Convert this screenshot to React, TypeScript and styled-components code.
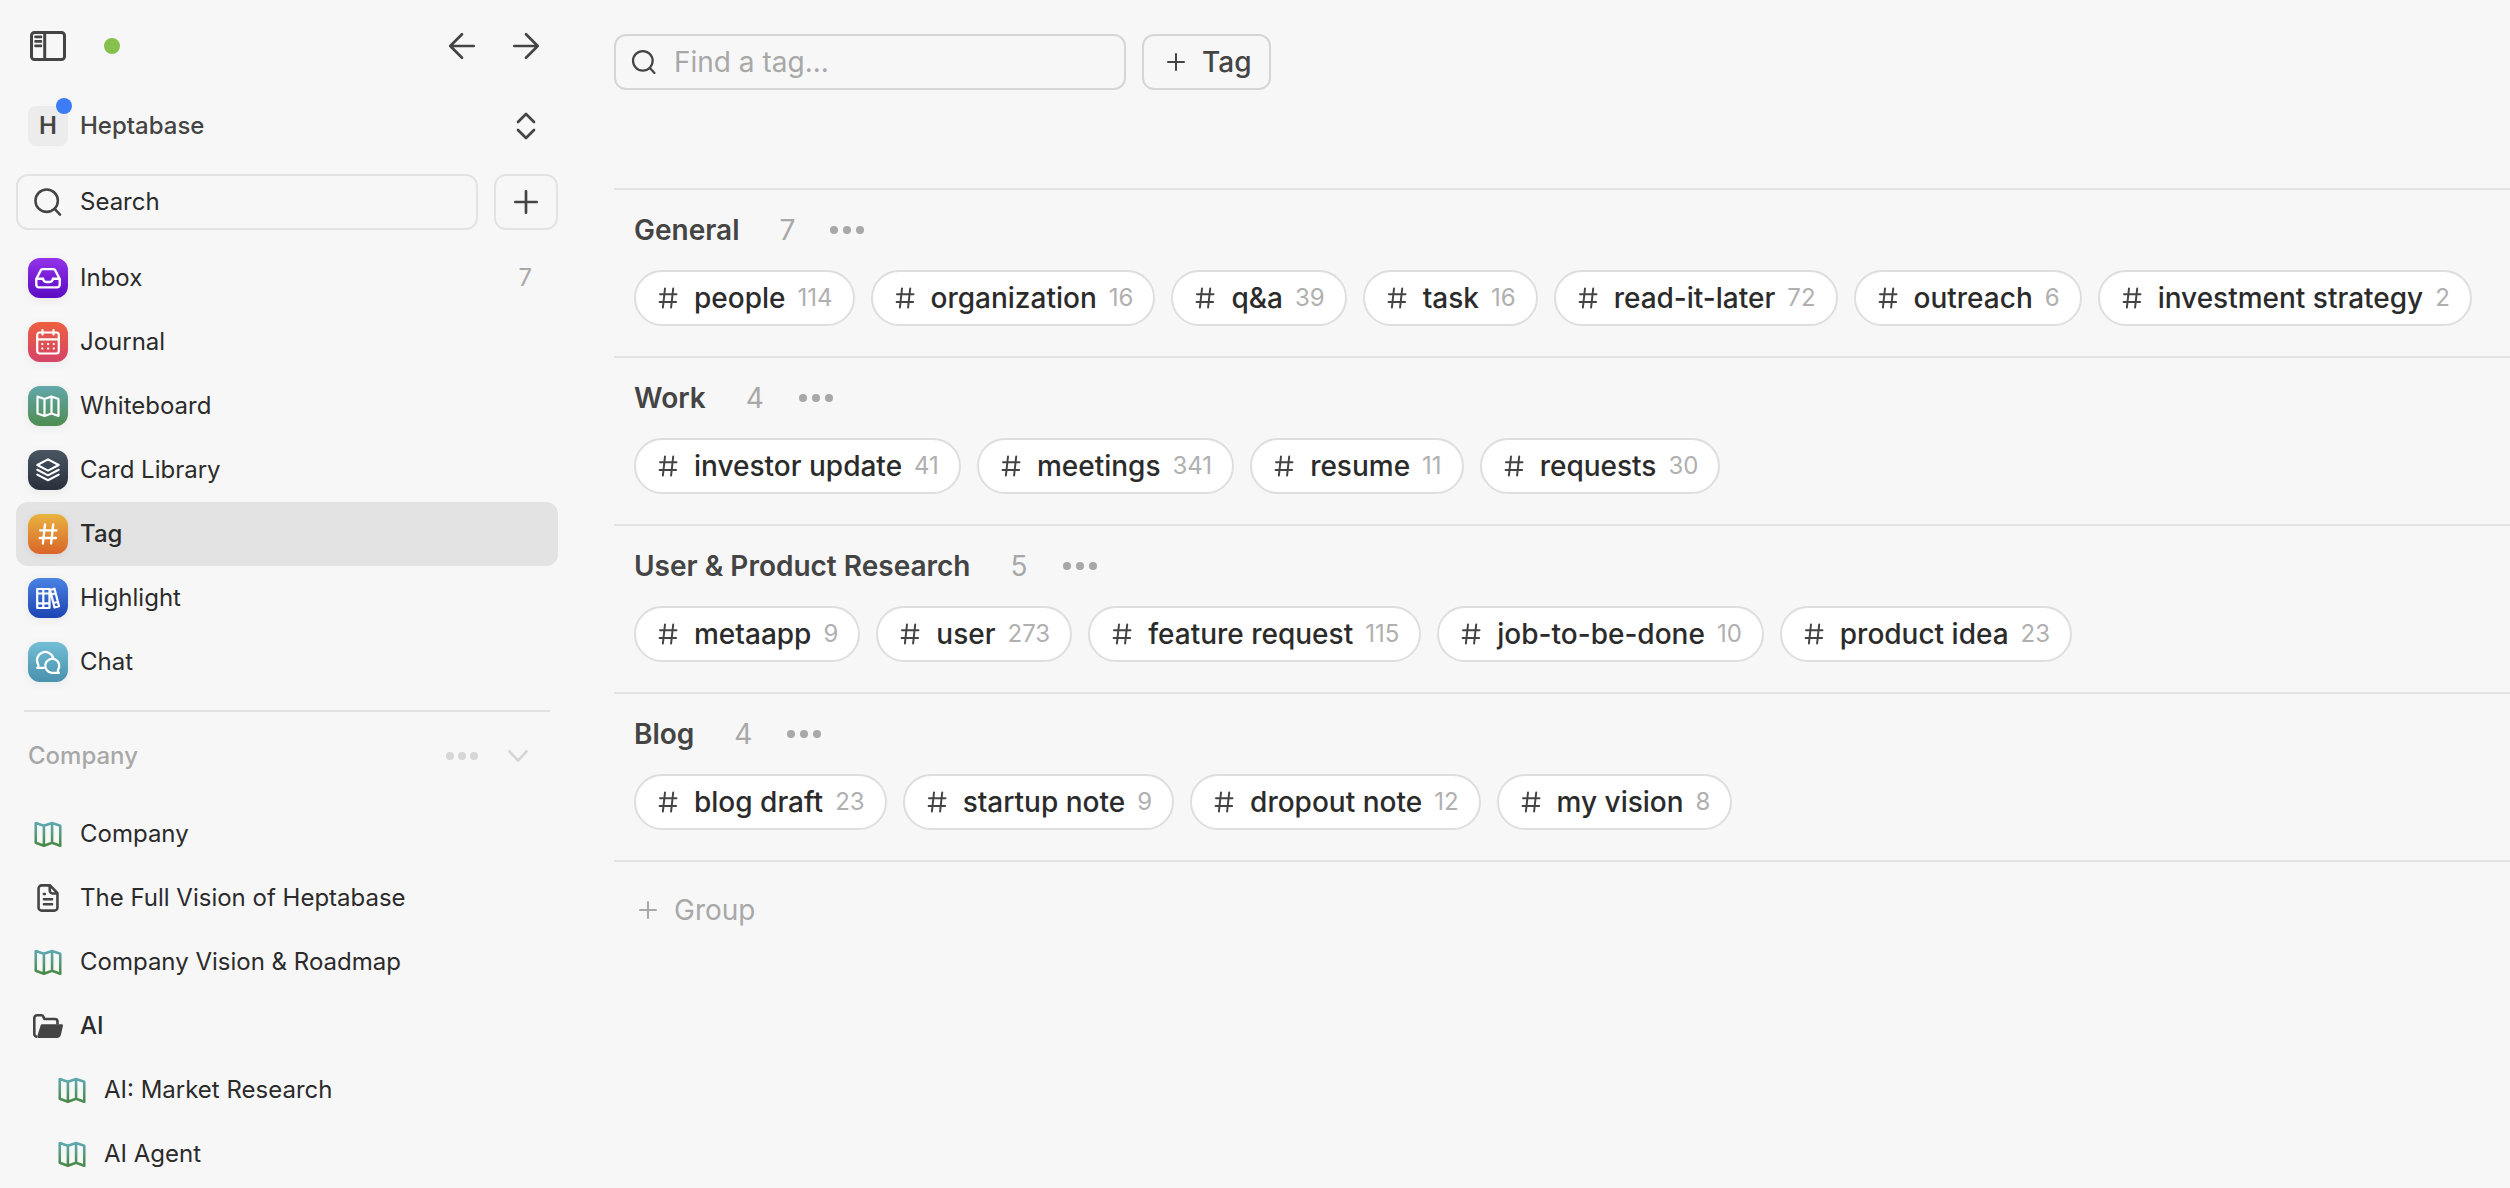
import React, { useState } from "react";
import styled, { createGlobalStyle } from "styled-components";

const GlobalStyle = createGlobalStyle`
  *, *::before, *::after { box-sizing: border-box; }
  html, body { margin: 0; background: #f7f7f7; }
  body { font-family: Inter, "Liberation Sans", sans-serif; color: #2b2b2b; }
  button, input { font: inherit; color: inherit; }
  button { margin: 0; padding: 0; border: 0; background: none; cursor: pointer; }
  a { color: inherit; text-decoration: none; }
  ul { list-style: none; margin: 0; padding: 0; }
  svg { display: block; flex: none; }
`;

const Page = styled.div`
  display: flex;
  min-height: 100vh;
  background: #f7f7f7;
`;

const Sidebar = styled.aside`
  flex: 0 0 574px;
  height: 100vh;
  overflow: hidden;
  padding: 14px 16px 0;
  font-size: 24px;
  line-height: 32px;
`;

const TopBar = styled.div`
  display: flex;
  align-items: center;
  height: 64px;
  padding: 0 12px;
`;

const IconButton = styled.button`
  display: grid;
  place-items: center;
  width: 40px;
  height: 40px;
  color: #444;
`;

const StatusDot = styled.span`
  width: 16px;
  height: 16px;
  margin-left: 36px;
  border-radius: 50%;
  background: #86c04d;
`;

const History = styled.div`
  display: flex;
  gap: 24px;
  margin-left: auto;
`;

const Workspace = styled.button`
  display: flex;
  align-items: center;
  width: 100%;
  height: 64px;
  margin: 16px 0;
  padding: 0 12px;
  gap: 12px;
  color: #444;
  font-weight: 500;
  text-align: left;
`;

const Avatar = styled.span`
  position: relative;
  display: grid;
  place-items: center;
  width: 40px;
  height: 40px;
  border-radius: 8px;
  background: #ececec;
  font-weight: 600;
`;

const UnreadDot = styled.span`
  position: absolute;
  top: -8px;
  right: -4px;
  width: 16px;
  height: 16px;
  border-radius: 50%;
  background: #3d7bf7;
`;

const Grow = styled.span`
  flex: 1;
`;

const SearchRow = styled.div`
  display: flex;
  gap: 16px;
  margin-bottom: 16px;
`;

const SearchButton = styled.button`
  display: flex;
  flex: 1;
  align-items: center;
  gap: 12px;
  height: 56px;
  padding: 0 10px;
  border: 2px solid #e3e3e3;
  border-radius: 12px;
  text-align: left;
`;

const IconSlot = styled.span`
  display: grid;
  place-items: center;
  width: 40px;
  height: 40px;
  color: #444;
`;

const AddButton = styled.button`
  display: grid;
  place-items: center;
  width: 64px;
  height: 56px;
  border: 2px solid #e3e3e3;
  border-radius: 12px;
  color: #444;
`;

const NavLink = styled.a<{ $active?: boolean; $strong?: boolean; $nested?: boolean }>`
  display: flex;
  align-items: center;
  gap: 12px;
  height: 64px;
  padding: 0 26px 0 ${(p) => (p.$nested ? 36 : 12)}px;
  border-radius: 12px;
  background: ${(p) => (p.$active ? "#e3e3e3" : "transparent")};
  font-weight: ${(p) => (p.$active || p.$strong ? 500 : 400)};
`;

const AppIcon = styled.span<{ $from: string; $to: string }>`
  display: grid;
  place-items: center;
  width: 40px;
  height: 40px;
  border-radius: 12px;
  background: linear-gradient(${(p) => p.$from}, ${(p) => p.$to});
  box-shadow: 0 2px 10px rgba(0, 0, 0, 0.06);
  color: #fff;
`;

const NavCount = styled.span`
  margin-left: auto;
  color: #a8a8a8;
`;

const Divider = styled.hr`
  height: 2px;
  margin: 16px 8px 0;
  border: 0;
  background: #e3e3e3;
`;

const SectionHeader = styled.div`
  display: flex;
  align-items: center;
  height: 88px;
  margin-bottom: 2px;
  padding: 0 20px 0 12px;
  gap: 16px;
  color: #d6d6d6;
`;

const SectionTitle = styled.h2`
  flex: 1;
  margin: 0;
  color: #a8a8a8;
  font-size: 24px;
  font-weight: 500;
`;

const FaintButton = styled(IconButton)`
  color: inherit;
`;

const Main = styled.main`
  flex: 1;
  min-width: 0;
  padding: 34px 0 0 40px;
  font-size: 28px;
  line-height: 36px;
`;

const Toolbar = styled.div`
  display: flex;
  gap: 16px;
  margin-bottom: 98px;
`;

const SearchField = styled.label`
  display: flex;
  align-items: center;
  width: 512px;
  height: 56px;
  padding: 0 14px;
  gap: 16px;
  border: 2px solid #d6d6d6;
  border-radius: 12px;
  color: #444;
`;

const SearchInput = styled.input`
  flex: 1;
  min-width: 0;
  padding: 0;
  border: 0;
  outline: 0;
  background: none;
  &::placeholder {
    color: #a8a8a8;
    opacity: 1;
  }
`;

const NewTagButton = styled.button`
  display: flex;
  align-items: center;
  gap: 14px;
  height: 56px;
  padding: 0 18px 0 20px;
  border: 2px solid #d6d6d6;
  border-radius: 12px;
  color: #444;
  font-weight: 500;
`;

const Group = styled.section`
  padding: 20px 20px 30px;
  border-top: 2px solid #e3e3e3;
`;

const GroupHeader = styled.header`
  display: flex;
  align-items: center;
  height: 40px;
  margin-bottom: 20px;
  color: #a8a8a8;
`;

const GroupTitle = styled.h3`
  margin: 0 40px 0 0;
  color: #444;
  font-size: 28px;
  font-weight: 600;
`;

const GroupCount = styled.span`
  margin-right: 32px;
`;

const TagList = styled.ul`
  display: flex;
  flex-wrap: wrap;
  gap: 16px;
`;

const TagPill = styled.a`
  display: flex;
  align-items: center;
  height: 56px;
  padding: 0 20px;
  border: 2px solid #dedede;
  border-radius: 28px;
  background: #fff;
  color: #444;
  font-weight: 500;
  white-space: nowrap;
`;

const TagName = styled.span`
  margin: 0 12px 0 14px;
  color: #2b2b2b;
`;

const TagCount = styled.span`
  color: #b0b0b0;
  font-size: 24px;
  font-weight: 400;
`;

const AddGroup = styled.div`
  padding: 28px 22px;
  border-top: 2px solid #e3e3e3;
`;

const AddGroupButton = styled.button`
  display: flex;
  align-items: center;
  gap: 14px;
  height: 40px;
  color: #a8a8a8;
`;

type IconProps = { size?: number; width?: number; children: React.ReactNode };

const Icon = ({ size = 32, width = 2, children }: IconProps) => (
  <svg
    width={size}
    height={size}
    viewBox="0 0 24 24"
    fill="none"
    stroke="currentColor"
    strokeWidth={width}
    strokeLinecap="round"
    strokeLinejoin="round"
    overflow="visible"
    aria-hidden="true"
  >
    {children}
  </svg>
);

const SidebarIcon = () => (
  <svg width="40" height="40" viewBox="0 0 40 40" fill="none" stroke="currentColor" strokeWidth="3" strokeLinecap="round" aria-hidden="true">
    <rect x="3.5" y="6.5" width="33" height="27" rx="3" />
    <path d="M16.7 7v26" />
    <path d="M7.5 10.900h5.500M7.500 15.400h5.500M7.500 19.900h5.500" strokeWidth="2.600" />
  </svg>
);

const SearchIcon = ({ size = 32 }: { size?: number }) => (
  <Icon size={size} width={1.9}>
    <circle cx="11" cy="11" r="8.400" />
    <path d="M17 17.200 21 21.400" />
  </Icon>
);

const PlusIcon = ({ size = 32 }: { size?: number }) => (
  <Icon size={size}>
    <path d="M12 4v16M4 12h16" />
  </Icon>
);

const HashIcon = ({ width = 2 }: { width?: number }) => (
  <Icon size={24} width={width}>
    <path d="M4 8.300h16.500M3.600 16h16.500M9 2.500 6.900 21.500M17.200 2.500l-2.100 19" />
  </Icon>
);

const DotsIcon = ({ spread = 12 }: { spread?: number }) => (
  <svg width="40" height="40" viewBox="0 0 40 40" fill="currentColor" aria-hidden="true">
    <circle cx={20 - spread} cy="20" r="4" />
    <circle cx="20" cy="20" r="4" />
    <circle cx={20 + spread} cy="20" r="4" />
  </svg>
);

const mapPath =
  "M1.500 2.500 8.500 5l7-2.500L22.500 5v17L15.500 19.500 8.500 22 1.500 19.500ZM8.500 5v17M15.500 2.500v17";

const MapIcon = () => (
  <svg width="28" height="28" viewBox="0 0 24 24" fill="none" stroke="url(#map-gradient)" strokeWidth="2.200" strokeLinejoin="round" aria-hidden="true">
    <path d={mapPath} />
  </svg>
);

const DocIcon = () => (
  <Icon size={28} width={2.2}>
    <path d="M13.800 1.200H6.600a2.700 2.700 0 0 0-2.700 2.700v16.200a2.700 2.700 0 0 0 2.700 2.700h10.800a2.700 2.700 0 0 0 2.700-2.700V7.800ZM13.500 1.500v4a2.700 2.700 0 0 0 2.700 2.700h3.600" />
    <path d="M8.500 8.600h.8M8.500 13h7M8.500 17.300h7" />
  </Icon>
);

const FolderIcon = () => (
  <svg width="32" height="32" viewBox="0 0 32 32" fill="none" stroke="currentColor" strokeWidth="2.600" strokeLinejoin="round" aria-hidden="true">
    <path d="M5 26.700a2.700 2.700 0 0 1-2.700-2.700V8a2.700 2.700 0 0 1 2.700-2.700h4.500a2 2 0 0 1 1.800 1.200l1 2.500H23a2.500 2.500 0 0 1 2.500 2.500v3" />
    <path fill="currentColor" d="M10 15.500h19.700l-2 8.800a3 3 0 0 1-2.900 2.400H6.500Z" />
  </svg>
);

const apps = [
  {
    label: "Inbox", count: 7, size: 26, from: "#9333ea", to: "#5b0bc2",
    icon: <path d="M1.200 13v5.200a2.500 2.500 0 0 0 2.500 2.500h16.600a2.500 2.500 0 0 0 2.500-2.500V13L18.800 5a2 2 0 0 0-1.800-1.200H7A2 2 0 0 0 5.200 5ZM1.200 12.700h6.300c0 2 1.500 3 2.700 3h3.600c1.200 0 2.700-1 2.700-3h6.300" />,
  },
  {
    label: "Journal", from: "#ee6040", to: "#d44468",
    icon: (
      <>
        <rect x="1.200" y="2.500" width="21.600" height="21" rx="2.500" />
        <path d="M6.500 0v4.400M17.500 0v4.400M1.500 9.300h21" />
        <path d="M6.200 14h.2M12 14h.2M17.700 14h.2M6.200 18.500h.2M12 18.500h.2M17.700 18.500h.2" />
      </>
    ),
  },
  { label: "Whiteboard", from: "#62a8ab", to: "#4e8c50", icon: <path d={mapPath} /> },
  {
    label: "Card Library", from: "#4a5563", to: "#28303b",
    icon: <path d="M12 1.400 1.300 7 12 12.600 22.700 7ZM1.300 11.800 12 17.400l10.700-5.600M1.300 16.600 12 22.200l10.700-5.600" />,
  },
  { label: "Tag", from: "#e8b33f", to: "#d9652a", hash: true },
  {
    label: "Highlight", from: "#4a83e4", to: "#1c44b2",
    icon: <path d="M1.200 3h12.300v19h-12.300ZM7.300 3v19M1.200 7.500h12.300M1.200 17.300h12.300M14 4l4.500-1.300L23 20.200l-4.500 1.300ZM15.200 8.500l4.500-1.300M17.500 17l4.500-1.300" />,
  },
  {
    label: "Chat", from: "#73bfd6", to: "#4991ad",
    icon: (
      <>
        <path d="M8 17.800H1.200c1.200-.8 1.600-1.700 1.200-2.900A8.300 8.300 0 1 1 17.400 8.500" />
        <path d="M16 22.800h7c-1.200-.8-1.500-1.500-1.200-2.700A7 7 0 1 0 16 22.800Z" />
      </>
    ),
  },
];

const pages = [
  { label: "Company", icon: <MapIcon /> },
  { label: "The Full Vision of Heptabase", icon: <DocIcon /> },
  { label: "Company Vision & Roadmap", icon: <MapIcon /> },
  { label: "AI", icon: <FolderIcon />, strong: true },
  { label: "AI: Market Research", icon: <MapIcon />, nested: true },
  { label: "AI Agent", icon: <MapIcon />, nested: true },
];

const groups: { title: string; tags: [string, number][] }[] = [
  {
    title: "General",
    tags: [["people", 114], ["organization", 16], ["q&a", 39], ["task", 16], ["read-it-later", 72], ["outreach", 6], ["investment strategy", 2]],
  },
  { title: "Work", tags: [["investor update", 41], ["meetings", 341], ["resume", 11], ["requests", 30]] },
  {
    title: "User & Product Research",
    tags: [["metaapp", 9], ["user", 273], ["feature request", 115], ["job-to-be-done", 10], ["product idea", 23]],
  },
  { title: "Blog", tags: [["blog draft", 23], ["startup note", 9], ["dropout note", 12], ["my vision", 8]] },
];

const GradientDefs = styled.svg`
  position: absolute;
`;

export default function App() {
  const [query, setQuery] = useState("");

  return (
    <Page>
      <GlobalStyle />
      <GradientDefs width="0" height="0" aria-hidden="true">
        <defs>
          <linearGradient id="map-gradient" x1="0" y1="0" x2="0" y2="1">
            <stop offset="0" stopColor="#5fa8b0" />
            <stop offset="1" stopColor="#4a8a48" />
          </linearGradient>
        </defs>
      </GradientDefs>
      <Sidebar>
        <TopBar>
          <IconButton aria-label="Toggle sidebar"><SidebarIcon /></IconButton>
          <StatusDot />
          <History>
            <IconButton aria-label="Back">
              <Icon><path d="M20.800 12H3.200M12 3.200 3.200 12l8.800 8.800" /></Icon>
            </IconButton>
            <IconButton aria-label="Forward">
              <Icon><path d="M3.200 12h17.600M12 3.200l8.800 8.800-8.800 8.800" /></Icon>
            </IconButton>
          </History>
        </TopBar>
        <Workspace>
          <Avatar>H<UnreadDot /></Avatar>
          Heptabase
          <Grow />
          <IconSlot>
            <Icon><path d="m6 9 6-6 6 6M6 15l6 6 6-6" /></Icon>
          </IconSlot>
        </Workspace>
        <SearchRow>
          <SearchButton><IconSlot><SearchIcon /></IconSlot>Search</SearchButton>
          <AddButton aria-label="Create"><PlusIcon /></AddButton>
        </SearchRow>
        <nav>
          {apps.map((a) => (
            <NavLink key={a.label} href="#" $active={a.label === "Tag"}>
              <AppIcon $from={a.from} $to={a.to}>
                {a.hash ? <HashIcon width={2.3} /> : <Icon size={a.size ?? 24} width={2.2}>{a.icon}</Icon>}
              </AppIcon>
              {a.label}
              {a.count && <NavCount>{a.count}</NavCount>}
            </NavLink>
          ))}
        </nav>
        <Divider />
        <SectionHeader>
          <SectionTitle>Company</SectionTitle>
          <FaintButton aria-label="Section options"><DotsIcon /></FaintButton>
          <FaintButton aria-label="Collapse section">
            <Icon size={24} width={2.6}><path d="m3.500 7.500 8.500 9 8.500-9" /></Icon>
          </FaintButton>
        </SectionHeader>
        <nav>
          {pages.map((p) => (
            <NavLink key={p.label} href="#" $strong={p.strong} $nested={p.nested}>
              <IconSlot>{p.icon}</IconSlot>
              {p.label}
            </NavLink>
          ))}
        </nav>
      </Sidebar>
      <Main>
        <Toolbar>
          <SearchField>
            <SearchIcon size={28} />
            <SearchInput
              aria-label="Find a tag"
              placeholder="Find a tag..."
              value={query}
              onChange={(e) => setQuery(e.target.value)}
            />
          </SearchField>
          <NewTagButton><PlusIcon size={24} />Tag</NewTagButton>
        </Toolbar>
        {groups.map((g) => (
          <Group key={g.title}>
            <GroupHeader>
              <GroupTitle>{g.title}</GroupTitle>
              <GroupCount>{g.tags.length}</GroupCount>
              <FaintButton aria-label={`${g.title} options`}><DotsIcon spread={13} /></FaintButton>
            </GroupHeader>
            <TagList>
              {g.tags.map(([name, count]) => (
                <li key={name}>
                  <TagPill href="#">
                    <HashIcon />
                    <TagName>{name}</TagName>
                    <TagCount>{count}</TagCount>
                  </TagPill>
                </li>
              ))}
            </TagList>
          </Group>
        ))}
        <AddGroup>
          <AddGroupButton><PlusIcon size={24} />Group</AddGroupButton>
        </AddGroup>
      </Main>
    </Page>
  );
}
